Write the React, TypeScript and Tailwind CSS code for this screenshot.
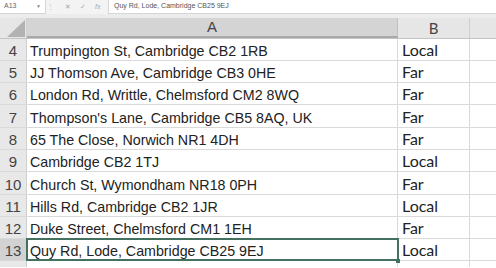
import React from 'react';

const rows: [number, string, string][] = [
  [4, 'Trumpington St, Cambridge CB2 1RB', 'Local'],
  [5, 'JJ Thomson Ave, Cambridge CB3 0HE', 'Far'],
  [6, 'London Rd, Writtle, Chelmsford CM2 8WQ', 'Far'],
  [7, "Thompson's Lane, Cambridge CB5 8AQ, UK", 'Far'],
  [8, '65 The Close, Norwich NR1 4DH', 'Far'],
  [9, 'Cambridge CB2 1TJ', 'Local'],
  [10, 'Church St, Wymondham NR18 0PH', 'Far'],
  [11, 'Hills Rd, Cambridge CB2 1JR', 'Local'],
  [12, 'Duke Street, Chelmsford CM1 1EH', 'Far'],
  [13, 'Quy Rd, Lode, Cambridge CB25 9EJ', 'Local'],
];

const App: React.FC = () => {
  return (
    <div className="w-[496px] h-[268px] overflow-hidden bg-white text-[#222]" style={{ fontFamily: '"Liberation Sans", Arial, sans-serif' }}>
      {/* formula bar */}
      <div className="h-[14px] bg-[#f3f3f3] flex items-stretch text-[7px] text-[#666]">
        <div className="w-[46px] bg-white border-r border-b border-[#d6d6d6] flex items-center justify-between px-[4px]">
          <span>A13</span>
          <span className="text-[5px] text-[#888]">▼</span>
        </div>
        <div className="w-[8px] flex items-center justify-center">
          <span className="text-[#bbb]">⋮</span>
        </div>
        <div className="w-[54px] flex items-center text-[#aaa]">
          <span className="ml-[11px]">✕</span>
          <span className="ml-[9px]">✓</span>
          <span className="ml-[9px] italic">fx</span>
        </div>
        <div className="flex-1 bg-white border-l border-b border-[#d6d6d6] flex items-center pl-[5px] text-[#555]">
          Quy Rd, Lode, Cambridge CB25 9EJ
        </div>
      </div>
      <div className="h-[4px] bg-[#ececec]" />
      {/* column headers */}
      <div className="h-[20.5px] grid grid-cols-[27px_371px_72px_1fr] bg-[#e6e6e6] border-b border-[#c4c4c4] text-[15px] text-[#444]">
        <div className="relative border-r border-[#d0d0d0]">
          <svg className="absolute right-[1px] bottom-[1px]" width="18" height="17" viewBox="0 0 18 17">
            <polygon points="18,0 18,17 0,17" fill="#b2b2b2" />
          </svg>
        </div>
        <div className="bg-[#d4d4d4] border-r border-[#c0c0c0] border-b-2 border-b-[#a9a9a9] flex items-end justify-center leading-none pb-[2px]">A</div>
        <div className="border-r border-[#d0d0d0] flex items-end justify-center leading-none pb-[2px]" style={{ fontFamily: 'Lato, "Liberation Sans", sans-serif' }}>B</div>
        <div />
      </div>
      {/* rows */}
      {rows.map(([n, addr, kind]) => {
        const sel = n === 13;
        return (
          <div key={n} className="h-[22.3px] grid grid-cols-[27px_371px_72px_1fr] border-b border-[#dadada] text-[15px] leading-none">
            <div className={`${sel ? 'bg-[#d2d2d2]' : 'bg-[#e8e8e8]'} border-r border-[#cfcfcf] flex items-end justify-center pb-[2px] text-[#444]`}>{n}</div>
            <div className={`relative flex items-end pl-[3px] pb-[2px] whitespace-nowrap border-r border-[#dadada] ${sel ? 'outline outline-2 outline-[#44715f] -outline-offset-1' : ''}`}>
              <span className="inline-block origin-left scale-x-[0.95]">{addr}</span>
              {sel && <span className="absolute right-[-3px] bottom-[-3px] w-[4px] h-[4px] bg-[#44715f]" />}
            </div>
            <div className="flex items-end pl-[4px] pb-[2px] border-r border-[#dadada] text-[16px]" style={{ fontFamily: 'Lato, "Liberation Sans", sans-serif' }}>{kind}</div>
            <div />
          </div>
        );
      })}
      <div className="h-[6px] grid grid-cols-[27px_371px_72px_1fr]">
        <div className="bg-[#e8e8e8] border-r border-[#cfcfcf]" />
        <div className="border-r border-[#dadada]" />
        <div className="border-r border-[#dadada]" />
        <div />
      </div>
    </div>
  );
};

export default App;
